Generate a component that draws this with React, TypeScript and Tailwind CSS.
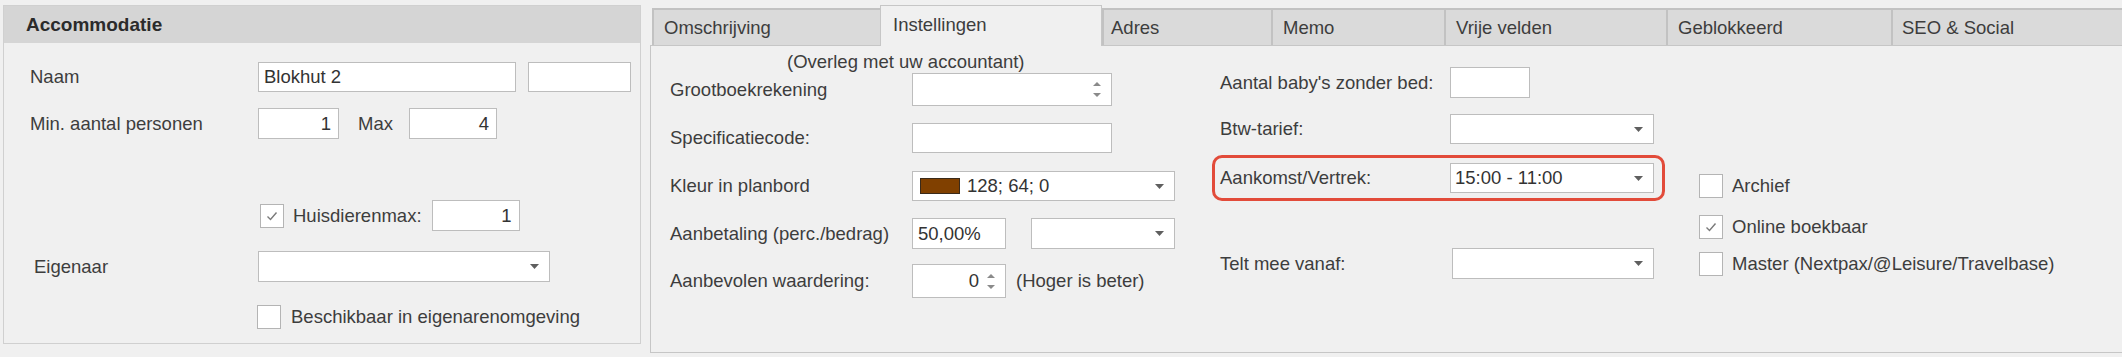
import React from 'react';

const Arrow = () => (
  <svg width="9" height="5" viewBox="0 0 9 5" className="shrink-0">
    <polygon points="0,0 9,0 4.5,5" fill="#5f5f5f" />
  </svg>
);

const Spin = () => (
  <svg width="8" height="17" viewBox="0 0 8 17" className="shrink-0">
    <polygon points="4,1 8,5 0,5" fill="#8a8a8a" />
    <polygon points="0,12 8,12 4,16" fill="#8a8a8a" />
  </svg>
);

const Check = ({ checked }: { checked?: boolean }) => (
  <div className="flex h-[24px] w-[24px] shrink-0 items-center justify-center border border-[#b4b4b4] bg-white">
    {checked && (
      <svg width="16" height="16" viewBox="0 0 16 16">
        <path d="M3.5 8.5 L6.5 11.5 L12.5 4.5" fill="none" stroke="#7a7a7a" strokeWidth="1.4" />
      </svg>
    )}
  </div>
);

const Field = ({ className = '', children }: { className?: string; children?: React.ReactNode }) => (
  <div className={`flex shrink-0 items-center border border-[#bdbdbd] bg-white text-[#333] ${className}`}>
    {children}
  </div>
);

const Select = ({ className = '', children }: { className?: string; children?: React.ReactNode }) => (
  <Field className={`justify-between pl-[6px] pr-[10px] ${className}`}>
    <div className="flex items-center">{children}</div>
    <Arrow />
  </Field>
);

const tabs = [
  { name: 'Omschrijving', w: 'w-[228px] pl-[10px]' },
  { name: 'Instellingen', w: 'w-[222px] pl-[12px]', active: true },
  { name: 'Adres', w: 'w-[169px] pl-[7px]' },
  { name: 'Memo', w: 'w-[173px] pl-[10px]' },
  { name: 'Vrije velden', w: 'w-[222px] pl-[10px]' },
  { name: 'Geblokkeerd', w: 'w-[225px] pl-[10px]' },
  { name: 'SEO & Social', w: 'flex-1 pl-[9px]' },
];

export default function App() {
  return (
    <div className="flex h-[357px] w-[2122px] items-start overflow-hidden bg-[#f0f0f0] font-['Liberation_Sans',Arial,sans-serif] text-[18.5px] leading-[22px] text-[#3d3d3d]">
      {/* Accommodatie */}
      <div className="ml-[3px] mt-[5px] h-[339px] w-[638px] shrink-0 border border-[#d0d0d0] bg-[#f0f0f0]">
        <div className="flex h-[37px] items-center bg-[#d5d5d5] pl-[22px] text-[19px] font-bold text-[#2b2b2b]">
          Accommodatie
        </div>
        <div className="flex flex-col pl-[26px]">
          <div className="mt-[19px] flex h-[30px] items-center">
            <span className="w-[228px]">Naam</span>
            <Field className="h-[30px] w-[258px] pl-[5px]">Blokhut 2</Field>
            <Field className="ml-[12px] h-[30px] w-[103px]" />
          </div>
          <div className="mt-[16px] flex h-[31px] items-center">
            <span className="w-[228px]">Min. aantal personen</span>
            <Field className="h-[31px] w-[81px] justify-end pr-[7px]">1</Field>
            <span className="ml-[19px] w-[51px]">Max</span>
            <Field className="h-[31px] w-[88px] justify-end pr-[7px]">4</Field>
          </div>
          <div className="mt-[61px] flex h-[31px] items-center">
            <span className="w-[230px]" />
            <Check checked />
            <span className="ml-[9px]">Huisdierenmax:</span>
            <Field className="ml-[10px] h-[31px] w-[88px] justify-end pr-[7px]">1</Field>
          </div>
          <div className="mt-[20px] flex h-[31px] items-center">
            <span className="w-[228px] pl-[4px]">Eigenaar</span>
            <Select className="h-[31px] w-[292px]" />
          </div>
          <div className="mt-[23px] flex h-[24px] items-center">
            <span className="w-[227px]" />
            <Check />
            <span className="ml-[10px]">Beschikbaar in eigenarenomgeving</span>
          </div>
        </div>
      </div>

      {/* Tabs */}
      <div className="ml-[9px] mt-[5px] flex flex-1 flex-col">
        <div className="flex h-[40px] items-end pl-[2px]">
          {tabs.map((t) =>
            t.active ? (
              <div
                key={t.name}
                className={`relative z-10 -mb-[1px] flex h-[41px] shrink-0 items-center border border-b-0 border-[#c6c6c6] bg-[#f0f0f0] pb-[3px] ${t.w}`}
              >
                {t.name}
              </div>
            ) : (
              <div
                key={t.name}
                className={`flex h-[37px] shrink-0 items-center border-l-2 border-t-2 border-[#c2c2c2] bg-[#dadada] ${t.w}`}
              >
                {t.name}
              </div>
            )
          )}
        </div>
        <div className="flex h-[308px] border-b border-l border-t border-[#c6c6c6] bg-[#f0f0f0]">
          {/* column A */}
          <div className="flex w-[524px] shrink-0 flex-col pl-[19px]">
            <div className="mt-[4px] h-[23px] pl-[117px] leading-[23px]">(Overleg met uw accountant)</div>
            <div className="flex h-[33px] items-center">
              <span className="w-[242px]">Grootboekrekening</span>
              <Field className="h-[33px] w-[200px] justify-end pr-[10px]">
                <Spin />
              </Field>
            </div>
            <div className="mt-[17px] flex h-[30px] items-center">
              <span className="w-[242px]">Specificatiecode:</span>
              <Field className="h-[30px] w-[200px]" />
            </div>
            <div className="mt-[18px] flex h-[30px] items-center">
              <span className="w-[242px]">Kleur in planbord</span>
              <Select className="h-[30px] w-[263px] !pl-[7px]">
                <div className="h-[16px] w-[40px] border border-[#3a2a1a] bg-[#804000]" />
                <span className="ml-[7px]">128; 64; 0</span>
              </Select>
            </div>
            <div className="mt-[17px] flex h-[31px] items-center">
              <span className="w-[242px]">Aanbetaling (perc./bedrag)</span>
              <Field className="h-[31px] w-[94px] pl-[5px]">50,00%</Field>
              <Select className="ml-[25px] h-[31px] w-[144px]" />
            </div>
            <div className="mt-[15px] flex h-[34px] items-center">
              <span className="w-[242px]">Aanbevolen waardering:</span>
              <Field className="h-[34px] w-[94px] justify-end pr-[10px]">
                <span className="mr-[8px]">0</span>
                <Spin />
              </Field>
              <span className="ml-[10px]">(Hoger is beter)</span>
            </div>
          </div>

          {/* column B */}
          <div className="ml-[37px] flex w-[453px] shrink-0 flex-col">
            <div className="mt-[21px] flex h-[31px] items-center pl-[8px]">
              <span className="w-[230px]">Aantal baby's zonder bed:</span>
              <Field className="h-[31px] w-[80px]" />
            </div>
            <div className="mt-[16px] flex h-[30px] items-center pl-[8px]">
              <span className="w-[230px]">Btw-tarief:</span>
              <Select className="h-[30px] w-[204px]" />
            </div>
            <div className="mt-[11px] rounded-[10px] border-[3px] border-[#e24b3a] pb-[5px] pl-[5px] pr-[8px] pt-[5px]">
              <div className="flex h-[30px] items-center">
                <span className="w-[230px]">Aankomst/Vertrek:</span>
                <Select className="h-[30px] w-[204px] !pl-[4px]">15:00 - 11:00</Select>
              </div>
            </div>
            <div className="mt-[47px] flex h-[31px] items-center pl-[8px]">
              <span className="w-[232px]">Telt mee vanaf:</span>
              <Select className="h-[31px] w-[202px]" />
            </div>
          </div>

          {/* column C */}
          <div className="ml-[34px] flex flex-col">
            <div className="mt-[128px] flex h-[24px] items-center">
              <Check />
              <span className="ml-[9px]">Archief</span>
            </div>
            <div className="mt-[17px] flex h-[24px] items-center">
              <Check checked />
              <span className="ml-[9px]">Online boekbaar</span>
            </div>
            <div className="mt-[13px] flex h-[24px] items-center">
              <Check />
              <span className="ml-[9px]">Master (Nextpax/@Leisure/Travelbase)</span>
            </div>
          </div>
        </div>
      </div>
    </div>
  );
}
